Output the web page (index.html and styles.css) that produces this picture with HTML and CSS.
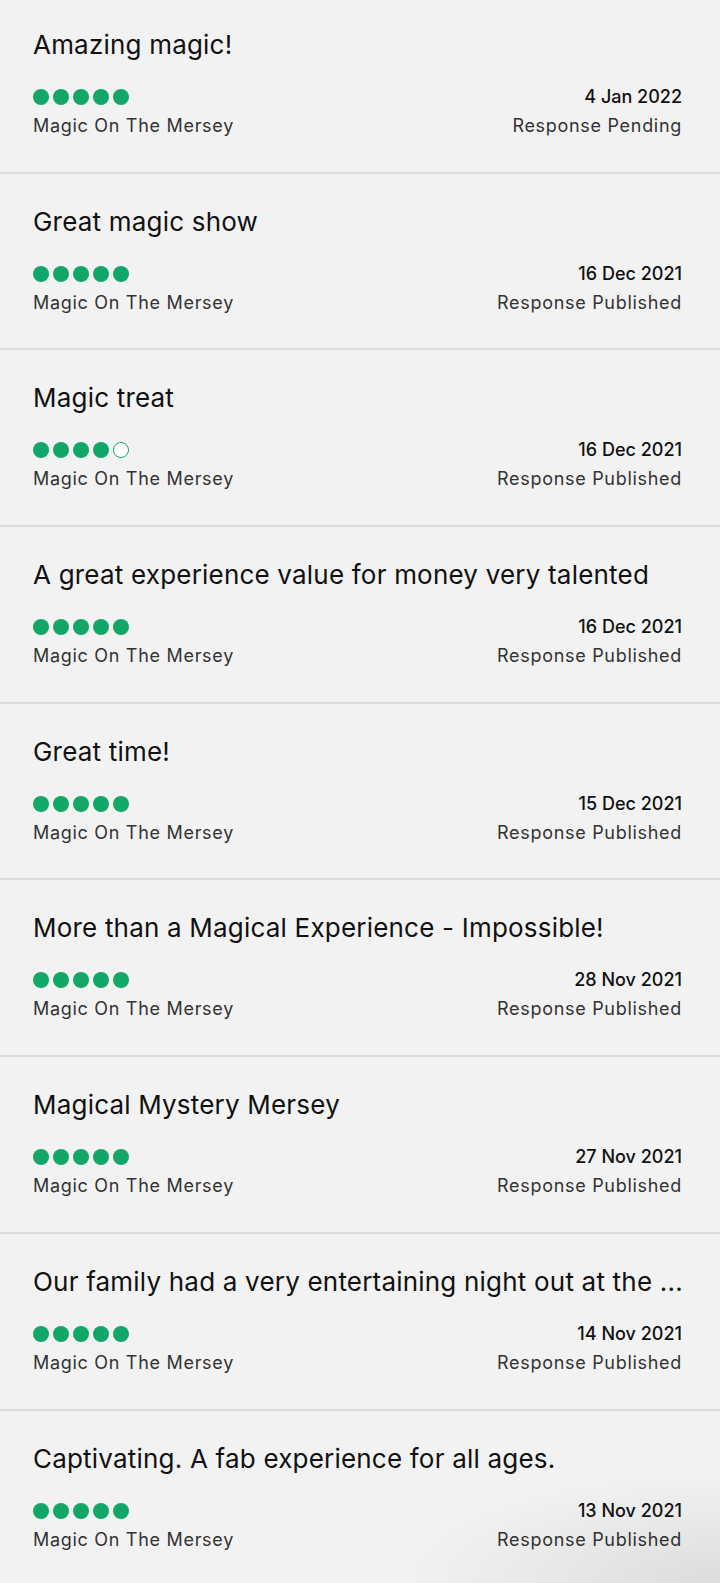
FILE: index.html
```html
<!DOCTYPE html>
<html lang="en">
<head>
<meta charset="utf-8">
<title>Reviews</title>
<link rel="stylesheet" href="styles.css">
</head>
<body>
<main class="list">
  <article class="review">
    <h2 class="title">Amazing magic!</h2>
    <div class="meta">
      <div class="left">
        <div class="bubbles"><span class="b"></span><span class="b"></span><span class="b"></span><span class="b"></span><span class="b"></span></div>
        <div class="venue">Magic On The Mersey</div>
      </div>
      <div class="right">
        <div class="date">4 Jan 2022</div>
        <div class="status">Response Pending</div>
      </div>
    </div>
  </article>
  <article class="review">
    <h2 class="title">Great magic show</h2>
    <div class="meta">
      <div class="left">
        <div class="bubbles"><span class="b"></span><span class="b"></span><span class="b"></span><span class="b"></span><span class="b"></span></div>
        <div class="venue">Magic On The Mersey</div>
      </div>
      <div class="right">
        <div class="date">16 Dec 2021</div>
        <div class="status">Response Published</div>
      </div>
    </div>
  </article>
  <article class="review">
    <h2 class="title">Magic treat</h2>
    <div class="meta">
      <div class="left">
        <div class="bubbles"><span class="b"></span><span class="b"></span><span class="b"></span><span class="b"></span><span class="b empty"></span></div>
        <div class="venue">Magic On The Mersey</div>
      </div>
      <div class="right">
        <div class="date">16 Dec 2021</div>
        <div class="status">Response Published</div>
      </div>
    </div>
  </article>
  <article class="review">
    <h2 class="title">A great experience value for money very talented</h2>
    <div class="meta">
      <div class="left">
        <div class="bubbles"><span class="b"></span><span class="b"></span><span class="b"></span><span class="b"></span><span class="b"></span></div>
        <div class="venue">Magic On The Mersey</div>
      </div>
      <div class="right">
        <div class="date">16 Dec 2021</div>
        <div class="status">Response Published</div>
      </div>
    </div>
  </article>
  <article class="review">
    <h2 class="title">Great time!</h2>
    <div class="meta">
      <div class="left">
        <div class="bubbles"><span class="b"></span><span class="b"></span><span class="b"></span><span class="b"></span><span class="b"></span></div>
        <div class="venue">Magic On The Mersey</div>
      </div>
      <div class="right">
        <div class="date">15 Dec 2021</div>
        <div class="status">Response Published</div>
      </div>
    </div>
  </article>
  <article class="review">
    <h2 class="title">More than a Magical Experience - Impossible!</h2>
    <div class="meta">
      <div class="left">
        <div class="bubbles"><span class="b"></span><span class="b"></span><span class="b"></span><span class="b"></span><span class="b"></span></div>
        <div class="venue">Magic On The Mersey</div>
      </div>
      <div class="right">
        <div class="date">28 Nov 2021</div>
        <div class="status">Response Published</div>
      </div>
    </div>
  </article>
  <article class="review">
    <h2 class="title">Magical Mystery Mersey</h2>
    <div class="meta">
      <div class="left">
        <div class="bubbles"><span class="b"></span><span class="b"></span><span class="b"></span><span class="b"></span><span class="b"></span></div>
        <div class="venue">Magic On The Mersey</div>
      </div>
      <div class="right">
        <div class="date">27 Nov 2021</div>
        <div class="status">Response Published</div>
      </div>
    </div>
  </article>
  <article class="review">
    <h2 class="title">Our family had a very entertaining night out at the ...</h2>
    <div class="meta">
      <div class="left">
        <div class="bubbles"><span class="b"></span><span class="b"></span><span class="b"></span><span class="b"></span><span class="b"></span></div>
        <div class="venue">Magic On The Mersey</div>
      </div>
      <div class="right">
        <div class="date">14 Nov 2021</div>
        <div class="status">Response Published</div>
      </div>
    </div>
  </article>
  <article class="review">
    <h2 class="title">Captivating. A fab experience for all ages.</h2>
    <div class="meta">
      <div class="left">
        <div class="bubbles"><span class="b"></span><span class="b"></span><span class="b"></span><span class="b"></span><span class="b"></span></div>
        <div class="venue">Magic On The Mersey</div>
      </div>
      <div class="right">
        <div class="date">13 Nov 2021</div>
        <div class="status">Response Published</div>
      </div>
    </div>
  </article>
</main>
<div class="corner-shade"></div>
</body>
</html>
```

FILE: styles.css
```css
html, body {
  margin: 0;
  padding: 0;
  background: #f2f2f2;
  overflow: hidden;
}
body {
  font-family: Inter, "Liberation Sans", sans-serif;
  color: #111;
  height: 1583px;
  position: relative;
}
.list {
  display: flex;
  flex-direction: column;
  margin-top: -3px;
}
.review {
  padding: 33px 38px 35.7px 33px;
  border-bottom: 2px solid #dcdcdc;
}
.title {
  margin: 0;
  font-size: 26px;
  line-height: 30px;
  font-weight: 400;
  letter-spacing: 0.2px;
  color: #111;
  white-space: nowrap;
}
.meta {
  margin-top: 27px;
  display: flex;
  justify-content: space-between;
}
.left, .right {
  display: flex;
  flex-direction: column;
  gap: 9px;
}
.right {
  align-items: flex-end;
}
.bubbles {
  height: 20px;
  display: flex;
  align-items: center;
  gap: 4px;
}
.b {
  width: 16px;
  height: 16px;
  border-radius: 50%;
  background: #13a669;
  box-sizing: border-box;
}
.b.empty {
  background: #fff;
  border: 1.5px solid #13a669;
}
.venue, .status {
  font-size: 18px;
  line-height: 20px;
  letter-spacing: 0.7px;
  color: #333;
}
.date {
  font-size: 18px;
  line-height: 20px;
  font-weight: 500;
  letter-spacing: 0;
  color: #111;
}
.corner-shade {
  position: absolute;
  right: 0;
  bottom: 0;
  width: 320px;
  height: 110px;
  background: radial-gradient(ellipse at 100% 100%, rgba(0,0,0,0.09) 0%, rgba(0,0,0,0.04) 40%, rgba(0,0,0,0) 72%);
  pointer-events: none;
}
```
